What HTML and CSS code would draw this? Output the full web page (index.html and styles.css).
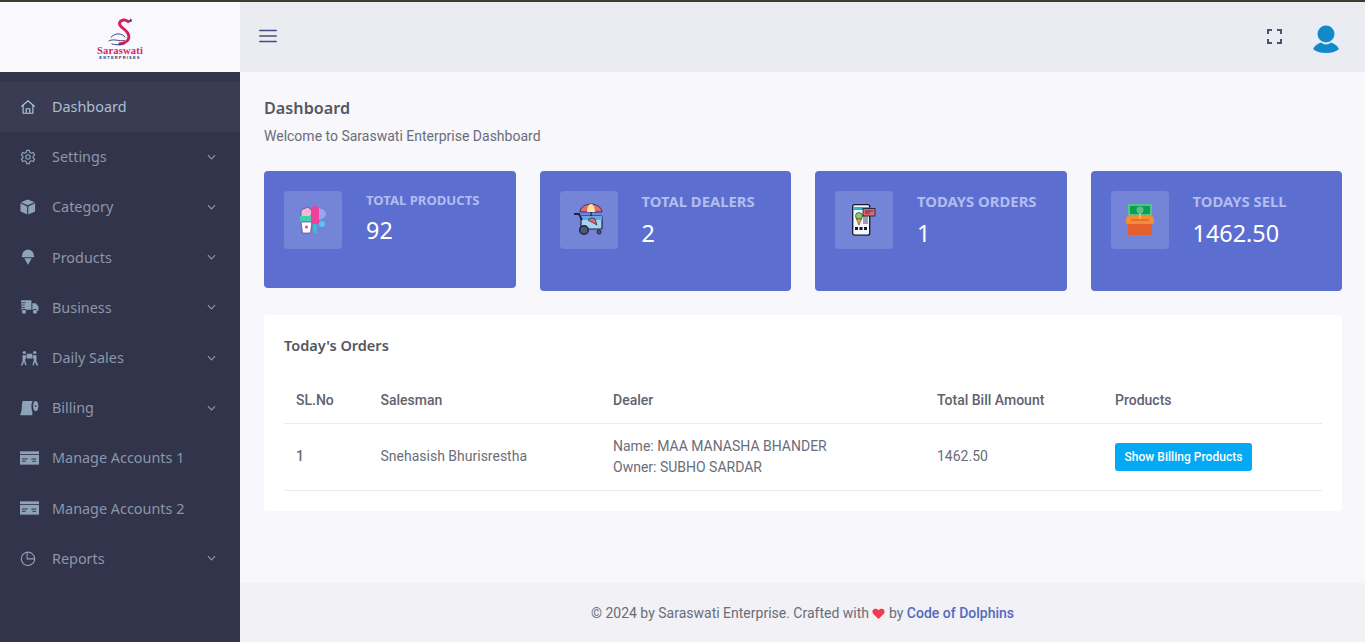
FILE: index.html
```html
<!DOCTYPE html>
<html lang="en">
<head>
<meta charset="utf-8">
<title>Saraswati Enterprise Dashboard</title>
<link rel="stylesheet" href="styles.css">
</head>
<body>
<div class="stripe"></div>
<div class="app">
  <aside class="sidebar">
    <div class="brand">
      <div class="logo">
        <svg class="swan" viewBox="0 0 36 40">
          <path d="M29 5C24 1 17 3 16.500 8C16 14 29 16 30 26C30.500 33 25 36 17 37" fill="none" stroke="#d81f5c" stroke-width="4.200" stroke-linecap="round"/>
          <path d="M32 0l.9 2.200 2.300-.3-1.500 1.800 1.100 2-2.200-.8-1.700 1.600.1-2.300-2-1.100 2.300-.5z" fill="#2b2f7c"/>
          <path d="M4 28C10 21 20 21 25 28M1 33C8 29 16 34 24 32M5 37C11 39 18 39 24 37" fill="none" stroke="#2b2f7c" stroke-width="1.300"/>
        </svg>
        <span class="logo-name">Saraswati</span>
        <span class="logo-sub">ENTERPRISES</span>
      </div>
    </div>
    <nav class="menu">
      <a class="item active">
        <svg class="ico" viewBox="0 0 18 18" fill="none" stroke="currentColor" stroke-width="1.300"><path d="M1.500 8.500L9 2l7.500 6.500M3.500 7v9h11V7M7 16v-5h4v5"/></svg>
        <span class="label">Dashboard</span>
      </a>
      <a class="item">
        <svg class="ico" viewBox="0 0 18 18" fill="none" stroke="currentColor" stroke-width="1.300"><path d="M7.500 1.500h3l.5 2.200 1.700 1 2.200-.7 1.500 2.600-1.700 1.500v1.800l1.700 1.500-1.500 2.600-2.200-.7-1.700 1-.5 2.200h-3L7 14.300l-1.700-1-2.200.7-1.500-2.600 1.700-1.500V8.100L1.600 6.600 3.100 4l2.200.7 1.700-1z"/><circle cx="9" cy="9" r="2.500"/></svg>
        <span class="label">Settings</span>
        <svg class="chev" viewBox="0 0 10 6"><path d="M1 1l4 4 4-4" fill="none" stroke="currentColor" stroke-width="1.300"/></svg>
      </a>
      <a class="item">
        <svg class="ico" viewBox="0 0 18 18" fill="currentColor"><path d="M8.600 .5L1 3.700l7.600 3.200 7.900-3.200zM.5 4.900v9L8 17.500V8.300zM17 4.900L9.300 8.300v9.200l7.700-3.400z"/></svg>
        <span class="label">Category</span>
        <svg class="chev" viewBox="0 0 10 6"><path d="M1 1l4 4 4-4" fill="none" stroke="currentColor" stroke-width="1.300"/></svg>
      </a>
      <a class="item">
        <svg class="ico" viewBox="0 0 18 18" fill="currentColor"><path d="M2.500 7a6.500 6.500 0 0 1 13 0c.7.500.7 2-.3 2.300H2.800C1.800 9 1.800 7.500 2.500 7zM4.800 10.300h8.400L9 18z"/></svg>
        <span class="label">Products</span>
        <svg class="chev" viewBox="0 0 10 6"><path d="M1 1l4 4 4-4" fill="none" stroke="currentColor" stroke-width="1.300"/></svg>
      </a>
      <a class="item">
        <svg class="ico wide" viewBox="0 0 20 16" fill="currentColor"><path d="M1 1h11v10H6.500a3 3 0 0 0-5 .5zM13 4h3.500l3 3.500V12h-1.200a3 3 0 0 0-5-.8H13z"/><circle cx="4.200" cy="13" r="2.200"/><circle cx="15.800" cy="13" r="2.200"/><path d="M0 3.500h6M0 6h5M0 8.500h5" stroke="#31344a" stroke-width=".8"/></svg>
        <span class="label">Business</span>
        <svg class="chev" viewBox="0 0 10 6"><path d="M1 1l4 4 4-4" fill="none" stroke="currentColor" stroke-width="1.300"/></svg>
      </a>
      <a class="item">
        <svg class="ico wide" viewBox="0 0 20 16" fill="currentColor"><circle cx="4.500" cy="2.200" r="1.700"/><circle cx="15.500" cy="2.200" r="1.700"/><rect x="7" y="3.500" width="6" height="5"/><path d="M2.500 5h4v3.500h-1v2l1.500 5H5.500L4.300 12l-1.800 4H.8l2-5zM17.500 5h-4v3.500h1v2l-1.500 5h1.500l1.200-3.500 1.800 4h1.700l-2-5z"/></svg>
        <span class="label">Daily Sales</span>
        <svg class="chev" viewBox="0 0 10 6"><path d="M1 1l4 4 4-4" fill="none" stroke="currentColor" stroke-width="1.300"/></svg>
      </a>
      <a class="item">
        <svg class="ico wide" viewBox="0 0 20 16" fill="currentColor"><path d="M3 .5h10.500c-1 1-1.500 3-1.500 5 0 3 .5 5 1 6.500v3.500H0C1.500 13 2 9 2 6c0-2.500.3-4.500 1-5.500z"/><path d="M16.500.5c1.800 0 2.800 2.500 2.800 5.500s-1 5.500-2.800 5.500-2.700-2.500-2.700-5.500S14.700.5 16.500.5z"/><circle cx="16.500" cy="6" r="1" fill="#31344a"/></svg>
        <span class="label">Billing</span>
        <svg class="chev" viewBox="0 0 10 6"><path d="M1 1l4 4 4-4" fill="none" stroke="currentColor" stroke-width="1.300"/></svg>
      </a>
      <a class="item">
        <svg class="ico wide" viewBox="0 0 20 14"><rect width="20" height="14" fill="currentColor"/><path d="M0 3.300h20" stroke="#31344a" stroke-width=".9"/><path d="M2 8h6M2 10.500h4M12 8h5M13 10.500h4" stroke="#31344a" stroke-width="1.100"/></svg>
        <span class="label">Manage Accounts 1</span>
      </a>
      <a class="item">
        <svg class="ico wide" viewBox="0 0 20 14"><rect width="20" height="14" fill="currentColor"/><path d="M0 3.300h20" stroke="#31344a" stroke-width=".9"/><path d="M2 8h6M2 10.500h4M12 8h5M13 10.500h4" stroke="#31344a" stroke-width="1.100"/></svg>
        <span class="label">Manage Accounts 2</span>
      </a>
      <a class="item">
        <svg class="ico" viewBox="0 0 18 18" fill="none" stroke="currentColor" stroke-width="1.200"><path d="M16.500 10A7.500 7.500 0 1 1 8 2.500V10zM8 2.500A7.500 7.500 0 0 1 16.500 10"/></svg>
        <span class="label">Reports</span>
        <svg class="chev" viewBox="0 0 10 6"><path d="M1 1l4 4 4-4" fill="none" stroke="currentColor" stroke-width="1.300"/></svg>
      </a>
    </nav>
  </aside>
  <div class="main">
    <header class="topbar">
      <svg class="burger" width="18" height="14" viewBox="0 0 18 14"><path d="M.8 1.500h16.400M.8 7h16.400M.8 12.500h16.400" stroke="#45507e" stroke-width="1.700" stroke-linecap="round"/></svg>
      <div class="top-right">
        <svg class="expand" width="15" height="15" viewBox="0 0 15 15"><path d="M1 5V1h4M10 1h4v4M14 10v4h-4M5 14H1v-4" fill="none" stroke="#4e5272" stroke-width="2"/></svg>
        <div class="avatar">
          <svg width="26" height="28" viewBox="0 0 26 28"><circle cx="13" cy="9" r="8.500" fill="#1389c9"/><path d="M0 24c2-4 6-6 8-6.500 3 2.500 7 2.500 10 0 2 .5 6 2.500 8 6.500-3 2.500-7 4-13 4S3 26.500 0 24z" fill="#1389c9"/></svg>
        </div>
      </div>
    </header>
    <main class="content">
      <h1 class="page-title">Dashboard</h1>
      <p class="page-sub">Welcome to Saraswati Enterprise Dashboard</p>
      <section class="stats">
        <article class="stat stat-small">
          <div class="stat-icon">
            <svg width="30" height="30" viewBox="0 0 30 30"><ellipse cx="19" cy="9" rx="9" ry="6" fill="#9aa6ea"/><path d="M3 5l7-3 5 5-3 5H3z" fill="#f6b6d2" stroke="#4a3f9c" stroke-width=".7"/><rect x="2" y="11" width="13" height="6" fill="#3fd0b4"/><path d="M3 17h11l-1.500 11h-8z" fill="#fff" stroke="#4a3f9c" stroke-width=".7"/><circle cx="8.500" cy="22" r="1.500" fill="#ef3c8f"/><path d="M13 5a4 4 0 0 1 8 0v14h-8z" fill="#f0409a"/><rect x="15.500" y="19" width="3" height="9" fill="#32c4cf"/><circle cx="24" cy="19" r="3" fill="#54c7ea"/></svg>
          </div>
          <div class="stat-body">
            <h2 class="stat-title">TOTAL PRODUCTS</h2>
            <p class="stat-value">92</p>
          </div>
        </article>
        <article class="stat">
          <div class="stat-icon">
            <svg width="32" height="34" viewBox="0 0 32 34"><path d="M7 9a11 8 0 0 1 22 0z" fill="#e26a70" stroke="#1d2340" stroke-width=".8"/><path d="M14 9a4 8 0 0 1 8 0z" fill="#fbe39a"/><rect x="17.500" y="9" width="1.200" height="4" fill="#1d2340"/><rect x="8" y="13" width="21" height="13" rx="1" fill="#a8d4f4" stroke="#1d2340" stroke-width="1.200"/><path d="M8 13h21v4H8z" fill="#5fa7e8"/><path d="M15 17a5 5 0 0 1 7-1l2 6z" fill="#e2666e" stroke="#1d2340" stroke-width=".7"/><path d="M1 11h5l3 6" fill="none" stroke="#1d2340" stroke-width="1.800"/><circle cx="11" cy="27" r="4.300" fill="#515672" stroke="#1d2340" stroke-width="1.400"/><circle cx="26" cy="29" r="2" fill="#515672" stroke="#1d2340"/></svg>
          </div>
          <div class="stat-body">
            <h2 class="stat-title">TOTAL DEALERS</h2>
            <p class="stat-value">2</p>
          </div>
        </article>
        <article class="stat">
          <div class="stat-icon">
            <svg width="24" height="32" viewBox="0 0 24 32"><rect x=".7" y=".7" width="17" height="30.500" rx="2" fill="#f3f6fa" stroke="#111a33" stroke-width="1.300"/><rect x="1" y="3" width="16.500" height="3" fill="#2cb2c9"/><circle cx="7" cy="12" r="3.500" fill="#8ecb57" stroke="#111a33" stroke-width=".6"/><path d="M4.500 15h5L7 21z" fill="#f0a94e" stroke="#111a33" stroke-width=".5"/><path d="M11 13h5M11 15h5M11 17h5M11 19h5" stroke="#424a5f"/><rect x="3" y="23" width="3" height="3" fill="#111a33"/><rect x="7.500" y="23" width="3" height="3" fill="#111a33"/><rect x="12" y="23" width="3" height="3" fill="#111a33"/><rect x="11" y="4.500" width="12" height="7.500" fill="#e2666e" stroke="#111a33" stroke-width=".8"/><path d="M13 7h8M13 9h5" stroke="#111a33" stroke-width=".7"/></svg>
          </div>
          <div class="stat-body">
            <h2 class="stat-title">TODAYS ORDERS</h2>
            <p class="stat-value">1</p>
          </div>
        </article>
        <article class="stat">
          <div class="stat-icon">
            <svg width="32" height="32" viewBox="0 0 32 32"><rect x="4" y="0" width="24" height="12" fill="#55c28a"/><rect x="6" y="2" width="20" height="8" rx="1" fill="#0e9d52"/><circle cx="16" cy="6" r="3.500" fill="#55c28a"/><path d="M2 15l1.500-3h25l1.500 3v5H2z" fill="#f48c33"/><path d="M16 9v7" stroke="#f7c84a" stroke-width="1.400"/><path d="M7 16h18" stroke="#e2582a" stroke-width="1.200"/><path d="M4 20h24v11H4z" fill="#e55f2c"/></svg>
          </div>
          <div class="stat-body">
            <h2 class="stat-title">TODAYS SELL</h2>
            <p class="stat-value">1462.50</p>
          </div>
        </article>
      </section>
      <section class="orders">
        <h2 class="orders-title">Today's Orders</h2>
        <table class="table">
          <colgroup>
            <col class="c1"><col class="c2"><col class="c3"><col class="c4"><col class="c5">
          </colgroup>
          <thead>
            <tr><th>SL.No</th><th>Salesman</th><th>Dealer</th><th>Total Bill Amount</th><th>Products</th></tr>
          </thead>
          <tbody>
            <tr>
              <td class="strong">1</td>
              <td>Snehasish Bhurisrestha</td>
              <td>Name: MAA MANASHA BHANDER<br>Owner: SUBHO SARDAR</td>
              <td>1462.50</td>
              <td><button class="btn">Show Billing Products</button></td>
            </tr>
          </tbody>
        </table>
      </section>
    </main>
    <footer class="footer">© 2024 by Saraswati Enterprise. Crafted with <svg class="heart" width="13" height="11" viewBox="0 0 14 12"><path d="M7 12L1.200 6.300C-1.500 3 2.800-1.500 7 2.500c4.200-4 8.500.5 5.800 3.800z" fill="#f1394f"/></svg> by <a class="credit">Code of Dolphins</a></footer>
  </div>
</div>
</body>
</html>
```

FILE: styles.css
```css
* { box-sizing: border-box; }
html, body { margin: 0; height: 100%; overflow: hidden; }
body {
  font-family: Roboto, "Liberation Sans", sans-serif;
  font-size: 14px;
  line-height: 21px;
  color: #6a6d79;
  background: #f7f7fc;
  display: flex;
  flex-direction: column;
}
.stripe { height: 2px; background: #3c3d30; flex: none; }
.app { display: flex; flex: 1; min-height: 0; }

.sidebar { width: 240px; flex: none; background: #31344a; }
.brand { height: 70px; background: #f9f9fd; display: flex; justify-content: center; align-items: center; }
.logo { display: flex; flex-direction: column; align-items: center; width: 60px; padding-top: 5px; }
.swan { display: block; width: 25px; height: 28px; }
.logo-name { font-family: "Liberation Serif", serif; font-weight: 700; font-size: 10.500px; line-height: 9px; color: #d81f5c; letter-spacing: .2px; }
.logo-sub { font-family: "Liberation Sans", sans-serif; font-weight: 700; font-size: 4px; line-height: 6px; letter-spacing: 1.200px; color: #2b2f7c; }

.menu { padding-top: 10px; font-family: "Noto Sans", "Open Sans", sans-serif; font-size: 14.400px; }
.item { height: 50.200px; display: flex; align-items: center; padding: 0 24px 1px 20px; color: #8b97ac; }
.item.active { background: #393c52; color: #a9c0d6; }
.ico { width: 16px; height: 16px; flex: none; margin-right: 16px; color: #8ea3b9; }
.active .ico { color: #a9c9e0; }
.ico.wide { width: 19px; margin-right: 13px; }
.label { flex: 1; }
.chev { width: 9px; height: 6px; flex: none; color: #8b97ac; }

.main { flex: 1; min-width: 0; display: flex; flex-direction: column; }
.topbar { height: 70px; flex: none; background: #ebebf2; display: flex; justify-content: space-between; align-items: center; padding: 0 22px 2px 19px; }
.burger { display: block; }
.top-right { display: flex; align-items: center; gap: 27px; }
.expand { display: block; margin-top: 1px; }
.avatar { width: 34px; height: 34px; border-radius: 50%; background: #e6edf4; display: flex; align-items: flex-end; justify-content: center; }

.content { flex: 1; padding: 25px 23px 0 24px; }
.page-title { margin: 0; font-family: "Noto Sans", "Open Sans", sans-serif; font-size: 16.200px; line-height: 22px; font-weight: 600; color: #55575f; }
.page-sub { margin: 7px 0 0; line-height: 21px; }

.stats { display: grid; grid-template-columns: repeat(4, 1fr); gap: 24px; align-items: start; margin-top: 24px; }
.stat { height: 120px; background: #5c6fd0; border-radius: 4px; padding: 20px; display: flex; gap: 24px; }
.stat-small { height: 117px; }
.stat-icon { width: 58px; height: 58px; flex: none; background: rgba(255,255,255,.15); border-radius: 4px; display: flex; align-items: center; justify-content: center; }
.stat-title { margin: 0; font-family: "Noto Sans", "Open Sans", sans-serif; font-size: 14.800px; line-height: 20px; font-weight: 700; color: #b3bcf0; white-space: nowrap; }
.stat-small .stat-title { font-size: 13.100px; line-height: 18px; }
.stat-value { margin: 6px 0 0; font-family: "Noto Sans", "Open Sans", sans-serif; font-size: 23.400px; line-height: 33px; color: #fff; }
.stat-small .stat-value { margin-top: 5px; }

.orders { margin-top: 24px; background: #fff; border-radius: 4px; padding: 20px; }
.orders-title { margin: 0 0 21px; font-family: "Noto Sans", "Open Sans", sans-serif; font-size: 14.500px; line-height: 20px; font-weight: 600; color: #55575f; }
.table { width: 100%; border-collapse: collapse; table-layout: fixed; }
.c1 { width: 84.500px; } .c2 { width: 232.500px; } .c3 { width: 324px; } .c4 { width: 178px; }
.table th { text-align: left; font-weight: 500; padding: 13px 12px 11px; height: 47px; line-height: 21px; border-bottom: 1px solid #e9ecef; color: #5f626f; }
.table td { padding: 12px; height: 67px; border-bottom: 1px solid #e9ecef; vertical-align: middle; }
.strong { font-weight: 500; }
.btn { display: block; height: 28px; padding: 0 9.500px; border: 0; border-radius: 3px; background: #03a9f4; color: #fff; font-family: Roboto, sans-serif; font-size: 12px; font-weight: 500; line-height: 28px; letter-spacing: .03px; }

.footer { height: 59px; flex: none; background: #f1f1f6; text-align: center; line-height: 60px; }
.heart { vertical-align: -1px; }
.credit { color: #5568c2; font-weight: 500; }
```
